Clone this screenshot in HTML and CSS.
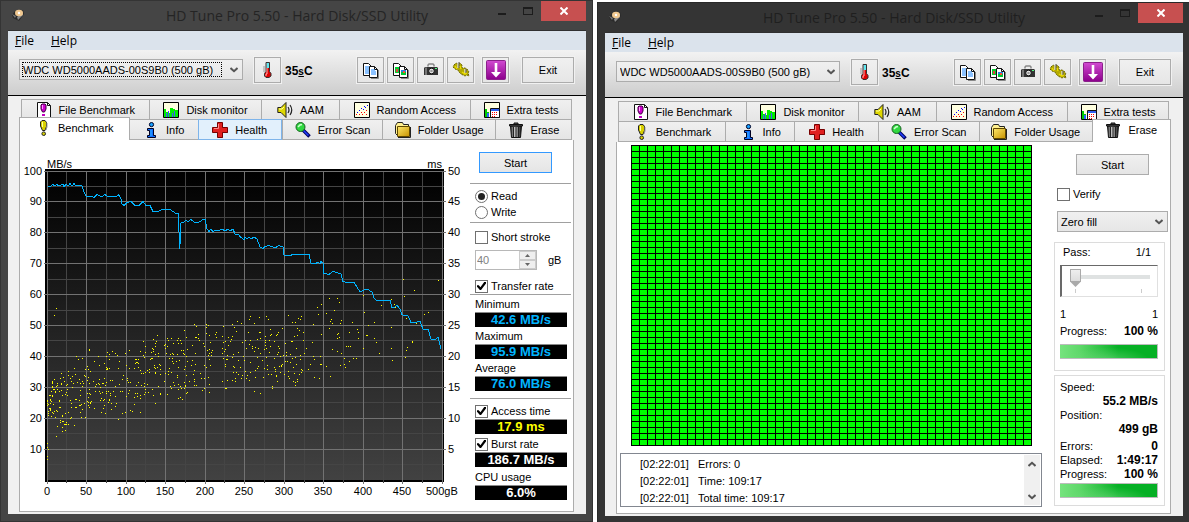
FILE: index.html
```html
<!DOCTYPE html>
<html lang="en">
<head>
<meta charset="utf-8">
<title>HD Tune Pro 5.50 - Hard Disk/SSD Utility</title>
<link rel="stylesheet" href="styles.css">
</head>
<body>
<svg class="sprite" aria-hidden="true">
  <linearGradient id="plotfill" x1="0" y1="0" x2="0" y2="1"><stop offset="0" stop-color="#000"/><stop offset="1" stop-color="#424242"/></linearGradient>
  <linearGradient id="gold" x1="0" y1="0" x2="1" y2="1"><stop offset="0" stop-color="#ffe96a"/><stop offset="1" stop-color="#c79200"/></linearGradient>
  <linearGradient id="metal"><stop offset="0" stop-color="#333"/><stop offset=".4" stop-color="#ccc"/><stop offset="1" stop-color="#111"/></linearGradient>
  <linearGradient id="violet" x1="0" y1="0" x2="0" y2="1"><stop offset="0" stop-color="#d24bd2"/><stop offset="1" stop-color="#8c008c"/></linearGradient>
  <symbol id="i-app" viewBox="0 0 14 14"><path d="M1 7l3-4 8-1 1 4-5 7-6-3z" fill="#2a2a2a"/><path d="M6 9l6-5v3l-5 5z" fill="#8a8a8a"/><ellipse cx="8" cy="5" rx="4" ry="3.200" fill="#f0c890"/><circle cx="8" cy="5" r="1.200" fill="#fff"/><path d="M1 6l4 2-1 2z" fill="#777"/></symbol>
  <symbol id="i-temp" viewBox="0 0 14 18"><path d="M5 1.500h3.500v9l1.500 2v2.500l-2 1.500H5L3.500 15v-2.500L5 10.500z" fill="#e00000" stroke="#333"/><path d="M5.500 2H8v5H5.500z" fill="#60e8f0"/><path d="M6 7v6H5v2" stroke="#ffb0b0" fill="none"/><path d="M2 6h2M2 8h2M2 10h2" stroke="#999"/></symbol>
  <symbol id="i-copy" viewBox="0 0 17 17"><path d="M1.500 1.500h5l3 3v9h-8z" fill="#fff" stroke="#111"/><path d="M3 5h5M3 7h5M3 9h5M3 11h5" stroke="#1684ff"/><path d="M7.500 4.500h5l3 3v8h-8z" fill="#fff" stroke="#111"/><path d="M12.500 4.500v3h3" fill="none" stroke="#111"/><path d="M9 8h4M9 10h5M9 12h5" stroke="#1684ff"/><path d="M9 16.500h7.500V8" stroke="#888" fill="none"/></symbol>
  <symbol id="i-copyimg" viewBox="0 0 17 17"><path d="M1.500 1.500h5l3 3v9h-8z" fill="#fff" stroke="#111"/><path d="M3 5h4v6H3z" fill="#00d030"/><path d="M4 7h2v3H4z" fill="#e04040"/><path d="M7.500 4.500h5l3 3v8h-8z" fill="#fff" stroke="#111"/><path d="M12.500 4.500v3h3" fill="none" stroke="#111"/><path d="M9 8h5v5H9z" fill="#00c832"/><path d="M9 8h5v2H9z" fill="#2880e0"/><path d="M11 9h2v2h-2z" fill="#ff5030"/><path d="M9 16.500h7.500V8" stroke="#888" fill="none"/></symbol>
  <symbol id="i-camera" viewBox="0 0 16 16"><path d="M5 4.500V3l1-1h4l1 1v1.500" fill="none" stroke="#888" stroke-width="1.500"/><path d="M1 6l1-1h12l1 1v7H1z" fill="#333"/><path d="M2 5.500h2V13H2z" fill="#777"/><circle cx="8.500" cy="9" r="2.800" fill="#eee" stroke="#111"/><circle cx="8.500" cy="9" r="1.300" fill="#999"/><path d="M12 6h2v1h-2z" fill="#50ff80"/></symbol>
  <symbol id="i-hands" viewBox="0 0 18 18"><path d="M2 4l2-2 2 1 2-1 2 2v3l3 0 2 1 2 3-1 1 1 3-2-1-2 1-4-2-2-2-1-2-3-1-2-2z" fill="#b4aa00" stroke="#6c6600" stroke-dasharray="2 1"/><path d="M6 1v6M13 8v5" stroke="#eee" stroke-width="1.200"/><path d="M7 1v6M14 8v5" stroke="#555"/><path d="M3 5l2 3M8 5l1 3M10 11l3 2 2-1" stroke="#f0e000" stroke-width="1.200" fill="none"/></symbol>
  <symbol id="i-down" viewBox="0 0 20 20"><rect x=".5" y=".5" width="19" height="19" rx="1" fill="url(#violet)" stroke="#8a208a"/><path d="M8.700 3h2.600v9H15l-5 5.500L5 12h3.700z" fill="#fff"/></symbol>
  <symbol id="i-filebench" viewBox="0 0 16 16"><path d="M1.500.5h10l3 3v12h-13z" fill="#fff" stroke="#111"/><path d="M11.500.5v3h3" fill="none" stroke="#111"/><path d="M6 2h3l1 1v4l-1.500 3h-2L5 7V3z" fill="#d000d0" stroke="#400040"/><path d="M6 3h1v4H6z" fill="#ff9cff"/><path d="M6 12h3v2H6z" fill="#c000c0"/></symbol>
  <symbol id="i-bang" viewBox="0 0 16 16"><path d="M7 .5h3l1.500 2v4L10 10.500H7.500L5.500 6V2z" fill="#d8d000" stroke="#222"/><path d="M7 2h1v5H7z" fill="#ffffa0"/><circle cx="8.700" cy="13.700" r="1.800" fill="#d8d000" stroke="#222"/><path d="M12 3v4l-1 3" fill="none" stroke="#999"/></symbol>
  <symbol id="i-monitor" viewBox="0 0 16 16"><path d="M.5.5h15v15H.5z" fill="#ffffe0" stroke="#000"/><path d="M1 7h2v3h3v1h1V6h3v1h2v1h3v7H1z" fill="#00ee00"/><path d="M3 11h1v4H3zM5 9h1v6H5zM11 9h1v6h-1zM9 11h1v4H9z" fill="#4050ff"/></symbol>
  <symbol id="i-sound" viewBox="0 0 16 16"><path d="M.8 5.500H4l5-5v15l-5-5H.8z" fill="#e0d800" stroke="#222"/><path d="M2 7h3l2-2" stroke="#ffffa0" fill="none"/><path d="M11 5q2 3 0 6M13 3q3.500 5 0 10" fill="none" stroke="#222" stroke-width="1.200"/></symbol>
  <symbol id="i-scatter" viewBox="0 0 16 16"><path d="M.5.5h15v15H.5z" fill="#ffffe0" stroke="#000"/><path d="M2 12h1v1H2zM5 12h1v1H5zM7 10h1v1H7zM8 12h1v1H8zM10 10h1v1h-1zM12 8h1v1h-1zM12 12h1v1h-1z" fill="#f00"/><path d="M3 10h1v1H3zM5 8h1v1H5zM7 6h1v1H7zM9 7h1v1H9zM11 5h1v1h-1zM13 3h1v1h-1zM10 4h1v1h-1z" fill="#00f"/></symbol>
  <symbol id="i-extra" viewBox="0 0 16 16"><path d="M.5.5h15v15H.5z" fill="#ffffe0" stroke="#000"/><path d="M1 7h2v3h2v5H1z" fill="#0c0"/><path d="M3 11h2v4H3z" fill="#2860ff"/><path d="M6.500 6.500h9v9h-9z" fill="#fff" stroke="#111"/><path d="M7 7h8v2H7z" fill="#3060f0"/><path d="M8 10h1v1H8zM10 10h1v1h-1zM12 10h1v1h-1zM8 12h1v1H8zM10 12h1v1h-1zM12 12h1v1h-1zM8 14h1v1H8zM10 14h1v1h-1z" fill="#f00"/></symbol>
  <symbol id="i-info" viewBox="0 0 16 16"><circle cx="8.500" cy="2.600" r="2.100" fill="#18a0ff" stroke="#002"/><path d="M4.500 6.500h6v7h2v2h-8v-2h2v-5h-2z" fill="#1070ff" stroke="#002"/><path d="M8 8v6" stroke="#30b0ff"/></symbol>
  <symbol id="i-health" viewBox="0 0 16 16"><path d="M6 1h5v5h5v5h-5v5H6v-5H1V6h5z" fill="#777"/><path d="M5.500.5h5v5h5v5h-5v5h-5v-5h-5v-5h5z" fill="#e02020" stroke="#700"/><path d="M6.500 2v4.500H2" fill="none" stroke="#ff8a8a"/></symbol>
  <symbol id="i-scan" viewBox="0 0 16 16"><path d="M8 8l6.500 6.500" stroke="#000060" stroke-width="3.500"/><path d="M8.500 8.500l5 5" stroke="#2040ff" stroke-width="1.500"/><circle cx="5.500" cy="5" r="4.500" fill="#30d840" stroke="#186020"/><path d="M3 5l2-2 2-.5" fill="none" stroke="#d0ffd0" stroke-width="1.500"/></symbol>
  <symbol id="i-folder" viewBox="0 0 16 16"><path d="M.5 3.500l2-3h5l1 2h5v11H2.500l-2-2z" fill="#fff090" stroke="#222"/><path d="M2.500 4.500h12v10h-12z" fill="url(#gold)" stroke="#604800"/><path d="M3 15.500h12.500V5" fill="none" stroke="#222"/></symbol>
  <symbol id="i-trash" viewBox="0 0 16 16"><path d="M2.500 4h11L12.500 15.500h-9z" fill="url(#metal)" stroke="#111"/><path d="M1.500 2.500h13V4h-13zM6 1h4v1.500H6z" fill="#555" stroke="#111"/><path d="M5.500 5v10M8 5v10M10.500 5v10" stroke="#222"/></symbol>
  <symbol id="i-chev" viewBox="0 0 8 6"><path d="M.5 1L4 4.200 7.500 1" fill="none" stroke="#555" stroke-width="2"/></symbol>
</svg>

<main class="desktop">
  <section class="window window--bench">
    <header class="titlebar">
      <svg class="app-icon"><use href="#i-app"/></svg>
      <h1 class="title">HD Tune Pro 5.50 - Hard Disk/SSD Utility</h1>
      <div class="winbtns">
        <button class="winbtn" aria-label="Minimize"><span class="glyph-min"></span></button>
        <button class="winbtn" aria-label="Maximize"><span class="glyph-max"></span></button>
        <button class="winbtn winbtn--close" aria-label="Close"><svg width="8" height="8"><path d="M.5 .5l7 7M7.500 .5l-7 7" stroke="#fff" stroke-width="2"/></svg></button>
      </div>
    </header>
    <div class="client">
      <nav class="menu"><button class="menu-item"><u>F</u>ile</button><button class="menu-item"><u>H</u>elp</button></nav>
      <div class="toolbar">
        <div class="combo combo--drive combo--focus"><select aria-label="Drive"><option>WDC WD5000AADS-00S9B0 (500 gB)</option></select><svg class="chev"><use href="#i-chev"/></svg></div>
        <button class="tool" aria-label="Temperature"><svg width="14" height="18"><use href="#i-temp"/></svg></button>
        <span class="temp">35<u class="deg">s</u>C</span>
        <div class="tools">
          <button class="tool" aria-label="Copy text"><svg width="17" height="17"><use href="#i-copy"/></svg></button>
          <button class="tool" aria-label="Copy image"><svg width="17" height="17"><use href="#i-copyimg"/></svg></button>
          <button class="tool" aria-label="Save screenshot"><svg width="16" height="16"><use href="#i-camera"/></svg></button>
          <button class="tool" aria-label="Options"><svg width="18" height="18"><use href="#i-hands"/></svg></button>
        </div>
        <button class="tool tool--down" aria-label="Minimize to tray"><svg width="20" height="20"><use href="#i-down"/></svg></button>
        <button class="tool tool--exit">Exit</button>
      </div>
      <div class="body">
        <div class="tabs tabs--top">
          <button class="tab w-file"><svg><use href="#i-filebench"/></svg>File Benchmark</button>
          <button class="tab w-disk"><svg><use href="#i-monitor"/></svg>Disk monitor</button>
          <button class="tab w-aam"><svg><use href="#i-sound"/></svg>AAM</button>
          <button class="tab w-random"><svg><use href="#i-scatter"/></svg>Random Access</button>
          <button class="tab w-extra"><svg><use href="#i-extra"/></svg>Extra tests</button>
        </div>
        <div class="tabs tabs--first">
          <button class="tab tab--active w-bench"><svg><use href="#i-bang"/></svg>Benchmark</button>
          <button class="tab w-info"><svg><use href="#i-info"/></svg>Info</button>
          <button class="tab tab--hover w-health"><svg><use href="#i-health"/></svg>Health</button>
          <button class="tab w-scan"><svg><use href="#i-scan"/></svg>Error Scan</button>
          <button class="tab w-folder"><svg><use href="#i-folder"/></svg>Folder Usage</button>
          <button class="tab w-erase"><svg><use href="#i-trash"/></svg>Erase</button>
        </div>
        <div class="page page--bench">
          <svg class="chart" id="chart" viewBox="20 140 450 371" role="img" aria-label="Transfer rate and access time by disk position"></svg>
          <div class="side">
            <button class="btn btn--default">Start</button>
            <div class="group">
              <label class="opt"><input type="radio" name="mode" checked>Read</label>
              <label class="opt"><input type="radio" name="mode">Write</label>
            </div>
            <div class="group group--stroke">
              <label class="opt"><input type="checkbox">Short stroke</label>
              <div class="spinrow">
                <span class="spin"><input class="spin-value" id="size" type="text" value="40" disabled><span class="spin-btns"><button disabled aria-label="Increase"><svg width="5" height="3"><path d="M0 3h5L2.500 0z" fill="#666"/></svg></button><button disabled aria-label="Decrease"><svg width="5" height="3"><path d="M0 0h5L2.500 3z" fill="#666"/></svg></button></span></span>
                <label for="size">gB</label>
              </div>
              <label class="opt"><input type="checkbox" checked>Transfer rate</label>
            </div>
            <div class="group group--rates">
              <div class="stat"><span class="stat-name">Minimum</span><output class="lcd lcd--blue">42.6 MB/s</output></div>
              <div class="stat"><span class="stat-name">Maximum</span><output class="lcd lcd--blue">95.9 MB/s</output></div>
              <div class="stat"><span class="stat-name">Average</span><output class="lcd lcd--blue">76.0 MB/s</output></div>
            </div>
            <div class="group group--more">
              <div class="stat"><label class="opt"><input type="checkbox" checked>Access time</label><output class="lcd lcd--yellow">17.9 ms</output></div>
              <div class="stat"><label class="opt"><input type="checkbox" checked>Burst rate</label><output class="lcd">186.7 MB/s</output></div>
              <div class="stat"><span class="stat-name">CPU usage</span><output class="lcd">6.0%</output></div>
            </div>
          </div>
        </div>
      </div>
    </div>
  </section>

  <section class="window window--erase">
    <header class="titlebar">
      <svg class="app-icon"><use href="#i-app"/></svg>
      <h1 class="title">HD Tune Pro 5.50 - Hard Disk/SSD Utility</h1>
      <div class="winbtns">
        <button class="winbtn" aria-label="Minimize"><span class="glyph-min"></span></button>
        <button class="winbtn" aria-label="Maximize"><span class="glyph-max"></span></button>
        <button class="winbtn winbtn--close" aria-label="Close"><svg width="8" height="8"><path d="M.5 .5l7 7M7.500 .5l-7 7" stroke="#fff" stroke-width="2"/></svg></button>
      </div>
    </header>
    <div class="client">
      <nav class="menu"><button class="menu-item"><u>F</u>ile</button><button class="menu-item"><u>H</u>elp</button></nav>
      <div class="toolbar">
        <div class="combo combo--drive"><select aria-label="Drive"><option>WDC WD5000AADS-00S9B0 (500 gB)</option></select><svg class="chev"><use href="#i-chev"/></svg></div>
        <button class="tool" aria-label="Temperature"><svg width="14" height="18"><use href="#i-temp"/></svg></button>
        <span class="temp">35<u class="deg">s</u>C</span>
        <div class="tools">
          <button class="tool" aria-label="Copy text"><svg width="17" height="17"><use href="#i-copy"/></svg></button>
          <button class="tool" aria-label="Copy image"><svg width="17" height="17"><use href="#i-copyimg"/></svg></button>
          <button class="tool" aria-label="Save screenshot"><svg width="16" height="16"><use href="#i-camera"/></svg></button>
          <button class="tool" aria-label="Options"><svg width="18" height="18"><use href="#i-hands"/></svg></button>
        </div>
        <button class="tool tool--down" aria-label="Minimize to tray"><svg width="20" height="20"><use href="#i-down"/></svg></button>
        <button class="tool tool--exit">Exit</button>
      </div>
      <div class="body">
        <div class="tabs tabs--top">
          <button class="tab w-file"><svg><use href="#i-filebench"/></svg>File Benchmark</button>
          <button class="tab w-disk"><svg><use href="#i-monitor"/></svg>Disk monitor</button>
          <button class="tab w-aam"><svg><use href="#i-sound"/></svg>AAM</button>
          <button class="tab w-random"><svg><use href="#i-scatter"/></svg>Random Access</button>
          <button class="tab w-extra"><svg><use href="#i-extra"/></svg>Extra tests</button>
        </div>
        <div class="tabs tabs--last">
          <button class="tab w-bench"><svg><use href="#i-bang"/></svg>Benchmark</button>
          <button class="tab w-info"><svg><use href="#i-info"/></svg>Info</button>
          <button class="tab w-health"><svg><use href="#i-health"/></svg>Health</button>
          <button class="tab w-scan"><svg><use href="#i-scan"/></svg>Error Scan</button>
          <button class="tab w-folder"><svg><use href="#i-folder"/></svg>Folder Usage</button>
          <button class="tab tab--active w-erase"><svg><use href="#i-trash"/></svg>Erase</button>
        </div>
        <div class="page page--erase">
          <div class="work">
            <div class="blocks" role="img" aria-label="Erased blocks"></div>
            <div class="log">
              <ul class="log-lines">
                <li><span>[02:22:01]</span><span>Errors: 0</span></li>
                <li><span>[02:22:01]</span><span>Time: 109:17</span></li>
                <li><span>[02:22:01]</span><span>Total time: 109:17</span></li>
              </ul>
              <div class="scroll"><button aria-label="Scroll up"><svg class="up" width="8" height="6"><use href="#i-chev"/></svg></button><button aria-label="Scroll down"><svg width="8" height="6"><use href="#i-chev"/></svg></button></div>
            </div>
          </div>
          <div class="panel">
            <button class="btn btn--start">Start</button>
            <label class="opt opt--verify"><input type="checkbox">Verify</label>
            <div class="combo combo--fill"><select aria-label="Pattern"><option>Zero fill</option></select><svg class="chev"><use href="#i-chev"/></svg></div>
            <div class="box">
              <div class="row row--pass"><label for="pass">Pass:</label><span>1/1</span></div>
              <div class="slider"><input id="pass" type="range" min="1" max="10" value="1"></div>
              <div class="row row--ends"><span>1</span><span>1</span></div>
              <div class="row"><span>Progress:</span><b>100 %</b></div>
              <progress class="bar" value="100" max="100" aria-label="Pass progress"></progress>
            </div>
            <div class="box box--stats">
              <div class="row">Speed:</div>
              <div class="row row--value"><b>55.2 MB/s</b></div>
              <div class="row">Position:</div>
              <div class="row row--value"><b>499 gB</b></div>
              <div class="row row--errors"><span>Errors:</span><b>0</b></div>
              <div class="row"><span>Elapsed:</span><b>1:49:17</b></div>
              <div class="row"><span>Progress:</span><b>100 %</b></div>
              <progress class="bar" value="100" max="100" aria-label="Total progress"></progress>
            </div>
          </div>
        </div>
      </div>
    </div>
  </section>
</main>
<script src="chart.js"></script>
</body>
</html>
```
FILE: styles.css
```css
* { box-sizing: border-box; }
body { margin: 0; background: #fff; color: #000; font: 11px/16px "Liberation Sans", Arial, sans-serif; }
button, input, select { font: inherit; color: inherit; margin: 0; }
button { padding: 0; display: flex; align-items: center; justify-content: center; }
b { font-size: 12px; }
.sprite { position: absolute; width: 0; height: 0; }

.desktop { display: grid; grid-template-columns: 593fr 592fr; column-gap: 4px; min-height: 100vh; overflow: hidden; }
.window { display: flex; flex-direction: column; }
.window--bench { background: #454545; border: 1px solid #343434; padding: 0 6px 7px 7px; }
.window--erase { background: #343434; border: 1px solid #292929; border-right: 0; border-bottom: 0; margin-top: 2px; padding: 0 6px 6px 7px; }

.titlebar { display: grid; grid-template-columns: 1fr auto 1fr; height: 30px; border-bottom: 1px solid #303030; }
.app-icon { width: 14px; height: 14px; margin: 7px 0 0 3px; }
.title { margin: 0; font: 14px/30px "Open Sans", "Noto Sans", sans-serif; color: #242424; }
.window--erase .title { color: #1f1f1f; }
.winbtns { display: flex; justify-content: flex-end; align-items: flex-start; }
.winbtn { width: 26px; height: 20px; border: 0; background: none; }
.winbtn--close { width: 45px; background: #c75050; }
.glyph-min { width: 8px; height: 2px; background: #1c1c1c; margin-top: 6px; }
.glyph-max { width: 10px; height: 8px; border: 1px solid #1c1c1c; border-top-width: 2px; }

.client { flex: 1; display: flex; flex-direction: column; background: #f0f0f0; }
.menu { display: flex; gap: 17px; height: 19px; padding-left: 7px; background: #dbe3ec; }
.menu-item { border: 0; background: none; font: 12px/19px "Open Sans", "Noto Sans", sans-serif; display: block; }

.toolbar { display: flex; align-items: flex-start; height: 46px; padding: 7px 12px 0 11px; border-bottom: 1px solid #000; background: linear-gradient(#f2f2f2, #cdcdcd); }
.combo { position: relative; border: 1px solid #acacac; height: 21px; background: linear-gradient(#f0f0f0, #e6e6e6); }
.combo select { appearance: none; width: 100%; height: 100%; border: 0; padding: 0 0 0 3px; background: none; display: block; outline: 0; }
.chev { position: absolute; right: 4px; top: 7px; width: 8px; height: 6px; pointer-events: none; }
.combo--drive { width: 224px; margin: 2px 11px 0 0; }
.combo--focus::after { content: ""; position: absolute; inset: 2px 20px 2px 2px; border: 1px dotted #000; pointer-events: none; }
.tool { width: 27px; height: 26px; border: 1px solid #acacac; background: linear-gradient(#f0f0f0, #e6e6e6); outline: 1px solid #f1f1f1; }
.temp { font-size: 12px; font-weight: bold; line-height: 28px; margin-left: 4px; }
.deg { font-size: 10px; }
.tools { display: flex; gap: 3px; margin-left: auto; }
.tool--down { margin: 0 13px 0 8px; }
.tool--exit { width: 52px; }

.body { flex: 1; display: flex; flex-direction: column; padding: 3px 12px 2px 11px; }
.tabs { display: flex; position: relative; height: 21px; }
.tabs--top { height: 20px; padding: 0 2px; }
.tabs--first { padding-right: 2px; }
.tabs--last { padding-left: 2px; }
.tab { flex-basis: 0; gap: 7px; border: 1px solid #acacac; border-right-width: 0; background: linear-gradient(#f0f0f0, #e5e5e5); white-space: nowrap; }
.tabs--top .tab { border-bottom: 0; }
.tab:last-child { border-right-width: 1px; }
.tab svg { width: 16px; height: 16px; flex: none; }
.tab--hover { background: #e2f0fc; border: 1px solid #7eb4ea; }
.tab--active { background: #fff; border-bottom: 0; border-right-width: 1px; margin-top: -2px; padding-bottom: 3px; }
.tab--active + .tab { border-left: 0; }
.w-file { flex-grow: 128; } .w-disk { flex-grow: 113; } .w-aam { flex-grow: 77; } .w-random { flex-grow: 132; } .w-extra { flex-grow: 101; }
.w-bench { flex-grow: 107; } .w-info { flex-grow: 69; } .w-health { flex-grow: 83; } .w-scan { flex-grow: 101; } .w-folder { flex-grow: 113; } .w-erase { flex-grow: 78; }
.tabs--first .w-bench { flex-grow: 110; }
.tabs--first .w-erase { flex-grow: 76; }

.page { flex: 1; display: grid; background: #fff; border: 1px solid #acacac; border-top: 0; }
.page--bench { grid-template-columns: minmax(0, 1fr) 103px; }
.page--erase { grid-template-columns: minmax(0, 1fr) 128px; }

.chart { width: 100%; display: block; shape-rendering: crispEdges; font-size: 11px; }
.plot { fill: url(#plotfill); stroke: #000; stroke-width: 2; }
.minor { stroke: #454545; fill: none; }
.major { stroke: #727272; fill: none; }
.rate { stroke: #00b4ff; fill: none; }
.seek { fill: #ff0; }

.side { padding: 12px 2px 0 0; }
.btn { width: 73px; height: 21px; border: 1px solid #acacac; background: linear-gradient(#f0f0f0, #e5e5e5); }
.btn--default { border-color: #3399ff; margin: 0 0 10px 9px; }
.group { border-top: 1px solid #a0a0a0; padding: 4px 4px 2px 5px; }
.opt { display: flex; align-items: center; gap: 3px; height: 16px; white-space: nowrap; }
.opt input { appearance: none; width: 13px; height: 13px; border: 1px solid #707070; background: #fff; flex: none; display: grid; place-items: center; }
.opt input[type=radio] { border-radius: 50%; }
.opt input[type=radio]:checked::before { content: ""; width: 7px; height: 7px; border-radius: 50%; background: #222; }
.opt input[type=checkbox]:checked::before { content: ""; width: 9px; height: 8px; background: #000; clip-path: polygon(0 40%, 20% 40%, 38% 65%, 80% 0, 100% 0, 100% 20%, 45% 100%, 32% 100%, 0 60%); }
.group--stroke { padding: 6px 4px 0 5px; }
.spinrow { display: flex; align-items: center; gap: 11px; margin: 5px 0 8px; }
.spin { display: flex; width: 62px; height: 20px; border: 1px solid #b8b8b8; background: #fff; }
.spin-value { flex: 1; min-width: 0; border: 0; padding: 0 2px 0 1px; background: none; color: #808080; }
.spin-btns { display: grid; width: 17px; background: #e4e4e4; }
.spin-btns button { border: 1px solid #ccc; background: #efefef; }
.group--rates { display: grid; gap: 1px; padding: 1px 4px 7px 5px; }
.group--more { display: grid; gap: 2px; padding: 4px 4px 0 5px; }
.stat { display: grid; grid-template-rows: 16px 15px; }
.lcd { background: #000; color: #fff; border-top: 1px solid #888; text-align: center; font: bold 13px/14px "Liberation Sans", Arial, sans-serif; }
.lcd--blue { color: #00b4ff; }
.lcd--yellow { color: #ff0; }

.work { padding: 3px 0 6px 3px; display: flex; flex-direction: column; justify-content: space-between; }
.blocks { width: 401px; height: 301px; margin-left: 11px; background: repeating-linear-gradient(#000 0 1px, transparent 1px 6px), repeating-linear-gradient(90deg, #000 0 1px, #0f0 1px 8px); }
.log { display: flex; justify-content: space-between; height: 54px; border: 1px solid #828790; padding: 1px; }
.log-lines { list-style: none; margin: 1px 0 0 18px; padding: 0; line-height: 17px; }
.log-lines li { display: grid; grid-template-columns: 58px auto; }
.scroll { width: 16px; display: flex; flex-direction: column; justify-content: space-between; background: #f0f0f0; }
.scroll button { border: 0; background: none; height: 17px; }
.up { transform: rotate(180deg); }

.panel { padding: 12px 2px 6px 12px; display: flex; flex-direction: column; }
.btn--start { margin-left: 22px; }
.opt--verify { margin: 11px 0 0 3px; }
.combo--fill { margin: 9px 0 10px 3px; height: 21px; }
.box { border: 1px solid #dcdcdc; margin-right: 3px; padding: 0 6px 0 5px; height: 129px; }
.box--stats { margin-top: 4px; padding-top: 4px; height: 131px; }
.row { display: flex; justify-content: space-between; line-height: 14px; }
.row--value { justify-content: flex-end; }
.row--pass { padding: 2px 7px 0 3px; }
.row--ends { padding: 10px 0 3px; }
.row--errors { padding-top: 3px; }
.box .bar { margin-top: 6px; }
.box--stats .bar { margin-top: 2px; }
.slider { height: 32px; margin-top: 6px; border: 1px solid #e0e0e0; border-top: 1px solid #696969; border-left: 2px solid #696969; padding: 3px 7px 0 8px; background: linear-gradient(#ccc, #ccc) 13px 23px / 1px 4px no-repeat, linear-gradient(#ccc, #ccc) 84% 23px / 1px 4px no-repeat; }
.slider input { appearance: none; display: block; width: 100%; height: 18px; background: linear-gradient(#dfe2e2, #dfe2e2) 0 6px / 100% 4px no-repeat; outline: 0; }
.slider input::-webkit-slider-thumb { appearance: none; width: 11px; height: 18px; background: linear-gradient(#eee, #ddd) center 1px / 9px 11px no-repeat #aaa; clip-path: polygon(0 0, 100% 0, 100% 70%, 50% 100%, 0 70%); }
.bar { appearance: none; display: block; width: 100%; height: 15px; border: 1px solid #bcbcbc; border-left: 0; background: #e6e6e6; }
.bar::-webkit-progress-bar { background: #e6e6e6; }
.bar::-webkit-progress-value { background: radial-gradient(ellipse at 50% 120%, #7fe08a88, transparent 60%), linear-gradient(90deg, #76e37e, #5fd86a 20%, #06b025 60%); }
```
FILE: chart.js
```js
// Benchmark plot: transfer rate as a line, access times as dots.
const NS = "http://www.w3.org/2000/svg";
const chart = document.getElementById("chart");
const add = (name, attrs, text) => {
  const el = document.createElementNS(NS, name);
  for (const key in attrs) el.setAttribute(key, attrs[key]);
  if (text !== undefined) el.textContent = text;
  chart.appendChild(el);
};
const px = gb => Math.floor(47 + gb * 0.791);
const py = rate => Math.floor(171 + (100 - rate) * 3.09);

add("rect", { class: "plot", x: 46, y: 170, width: 397, height: 311 });
let minor = "", major = "";
for (let i = 0; i <= 20; i++) {
  const x = px(i * 25) + 0.5;
  if (i % 2) minor += `M${x} 171V483`; else major += `M${x} 171V484`;
}
for (let i = 1; i <= 20; i++) {
  const y = py(i * 5) + 0.5;
  if (i % 2) minor += `M47 ${y}H444`; else major += `M44 ${y}H446`;
}
add("path", { class: "minor", d: minor });
add("path", { class: "major", d: major });

add("text", { x: 47, y: 168 }, "MB/s");
add("text", { x: 442, y: 168, "text-anchor": "end" }, "ms");
for (let v = 10; v <= 100; v += 10) {
  add("text", { x: 42, y: py(v) + 4, "text-anchor": "end" }, v);
  add("text", { x: 448, y: py(v) + 4 }, v / 2);
}
for (let g = 0; g < 500; g += 50) add("text", { x: px(g), y: 495, "text-anchor": "middle" }, g);
add("text", { x: 426, y: 495 }, "500gB");

const dots = `403,279 438,280 414,290 404,296 363,295 391,299 329,298 337,298 339,302 321,304 381,305 394,304 317,307 334,310 318,314 395,307 406,318 428,312 424,314 364,312 288,315 301,316 300,319 326,313 331,319 330,321 332,323 341,320 340,323 352,322 374,322 368,325 391,327 358,338 349,332 339,337 337,334 329,328 357,329 416,323 292,322 313,324 303,332 303,340 312,342 321,334 346,346 348,346 350,346 363,348 366,335 367,335 374,338 376,342 358,332 391,348 379,353 406,350 405,357 392,360 407,347 412,341 412,342 356,358 353,358 344,358 349,361 344,364 340,365 345,367 326,366 320,364 313,356 314,359 308,369 310,364 330,376 319,378 314,377 301,372 299,374 302,370 297,379 297,381 295,382 306,348 304,353 287,361 286,355 282,364 281,365 288,371 274,367 272,386 260,393 254,391 332,349 337,351 341,353 320,356 321,364 337,338 338,333 56,308 54,315 47,443 47,447 48,449 47,456 47,459 56,436`
  .split(" ").map(p => p.split(",").map(Number));

const upper = [[47, 395], [52, 374], [62, 366], [80, 344], [130, 337], [160, 329], [190, 318], [230, 312], [305, 314]];
const lower = [[47, 418], [52, 424], [60, 434], [68, 430], [95, 424], [130, 417], [160, 406], [200, 404], [240, 396], [305, 384]];
const at = (curve, x) => {
  const i = Math.max(1, curve.findIndex(p => p[0] >= x));
  const [a, b] = [curve[i - 1], curve[i]];
  return a[1] + (b[1] - a[1]) * (x - a[0]) / (b[0] - a[0]);
};
let seed = 20117;
const rnd = () => (seed = (seed * 16807) % 2147483647) / 2147483647;
for (let i = 0; i < 560; i++) {
  const x = 47 + 255 * Math.pow(rnd(), 1.35);
  const top = at(upper, x), bottom = at(lower, x);
  dots.push([Math.round(x), Math.round(top + (bottom - top) * (rnd() + rnd() * 0.3) / 1.3)]);
}
add("path", { class: "seek", d: dots.map(([x, y]) => `M${x} ${y}h1v1h-1z`).join("") });

add("polyline", { class: "rate", points: `48,186 51,186 53,184.500 55,186 57,184.500 59,186 61,185 63,184 64,187 66,184 68,186 70,183.500 72,186 74,183.500 76,186 80,185.500 82,186 84,192 86,196 91,196 94,197.500 97,194.500 100,196 103,196 105,194.500 107,196 117,196 118.500,194.500 121,199 122,204 124,205.500 127,202.500 131,201.500 135,205.500 139,205.500 143,201.500 146,205.500 150,205.500 153,211.500 158,211.500 162,209.500 170,209.500 173,211.500 176,213.500 178.500,213.500 179.500,249 180.500,240 181,223 184,222 186,220.500 188,221.500 191,219.500 195,223 199,222 201,221 203,219 205.500,219 206.500,228 209,231.500 211,229 213,232 215,230.500 219,230.500 222,229 225,231 228,229 230,231 233,229 235,234 238,234 241,237.500 244,239.500 245,237 247,239 249,237 251,239 254,237 257,239 260,247 263,248.500 265,246.500 269,245.500 273,247 275,248 279,245.500 283,247 284,255 291,255.500 292,254.500 309,254.500 311,263 316,263.500 318,262 320,264 321,261.500 323,263 323.500,273 329,274.500 333,271.500 337,272.500 341,274 343,281.500 347,282.500 354,282.500 357,287 360,292 363,290.500 367,289 372,292 374,298 376,300 390,300 392,307.500 395,307 397,305.500 400,309 402,314.500 404,315.500 408,316 411,322.500 417,322 420,321.500 423,329 428,329 431,339 436,339 438,337.500 440,345 441,348.500` });
```
